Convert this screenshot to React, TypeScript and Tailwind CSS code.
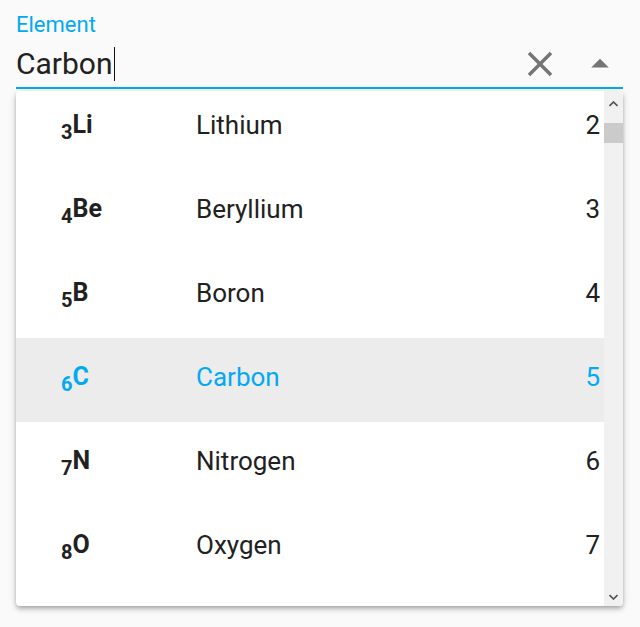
import { ReactNode } from "react"

interface Element {
  number: number
  symbol: string
  name: string
  index: number
}

// rows visible in the open listbox (list is scrolled a few px)
const ELEMENTS: Element[] = [
  { number: 3, symbol: "Li", name: "Lithium", index: 2 },
  { number: 4, symbol: "Be", name: "Beryllium", index: 3 },
  { number: 5, symbol: "B", name: "Boron", index: 4 },
  { number: 6, symbol: "C", name: "Carbon", index: 5 },
  { number: 7, symbol: "N", name: "Nitrogen", index: 6 },
  { number: 8, symbol: "O", name: "Oxygen", index: 7 },
]

const SELECTED = "Carbon"

function IconBox({ children }: { children: ReactNode }) {
  return <div className="w-[42px] h-[42px] flex items-center justify-center text-[#757575]">{children}</div>
}

function Row({ el }: { el: Element }) {
  const active = el.name === SELECTED
  return (
    <div
      className={`grid grid-cols-[135px_1fr_auto] items-center h-[84px] shrink-0 pl-[45px] pr-[4px] pb-[5px] text-[26px] ${
        active ? "bg-[#ececec] text-[#03a9f4]" : "text-[#212121]"
      }`}
    >
      <div className="font-bold">
        <span className="text-[20px] align-[-6px]">{el.number}</span>
        <span className="text-[25px]">{el.symbol}</span>
      </div>
      <div>{el.name}</div>
      <div className="text-right">{el.index}</div>
    </div>
  )
}

function Scrollbar() {
  return (
    <div className="w-[19px] shrink-0 bg-[#f1f1f1] flex flex-col items-center">
      <svg width="9" height="6" viewBox="0 0 9 6" className="mt-[10px]">
        <path d="M0.5 5 4.5 1 8.5 5" fill="none" stroke="#505050" strokeWidth="1.6" />
      </svg>
      <div className="w-full h-[20px] mt-[16px] bg-[#cbcbcb]" />
      <div className="flex-1" />
      <svg width="9" height="6" viewBox="0 0 9 6" className="mb-[6px]">
        <path d="M0.5 1 4.5 5 8.5 1" fill="none" stroke="#505050" strokeWidth="1.6" />
      </svg>
    </div>
  )
}

export default function App() {
  return (
    <div
      className="w-[640px] h-[627px] bg-[#fafafa] pl-[16px] pr-[17px] pt-[12px] flex flex-col"
      style={{ fontFamily: "Roboto, 'Noto Sans', sans-serif" }}
    >
      <label className="text-[22px] leading-[25px] text-[#03a9f4]">Element</label>
      <div className="mt-[7px] flex items-center h-[40px] mb-[3px]">
        <div className="flex-1 flex items-center text-[30px] leading-[40px] text-[#212121]">
          <span>{SELECTED}</span>
          <span className="w-[1px] h-[34px] bg-[#111] ml-[1px]" />
        </div>
        <div className="flex items-center gap-[18px] pr-[2px]">
          <IconBox>
            <svg viewBox="0 0 24 24" width="42" height="42" fill="currentColor">
              <path d="M19 6.41 17.59 5 12 10.59 6.41 5 5 6.41 10.59 12 5 17.59 6.41 19 12 13.41 17.59 19 19 17.59 13.41 12z" />
            </svg>
          </IconBox>
          <IconBox>
            <svg viewBox="0 0 24 24" width="42" height="42" fill="currentColor">
              <path d="M7 14l5-5 5 5z" />
            </svg>
          </IconBox>
        </div>
      </div>
      <div className="h-[2px] bg-[#03a9f4]" />
      <div className="mt-[2px] h-[515px] bg-white rounded-[4px] overflow-hidden flex shadow-[0_2px_4px_-1px_rgba(0,0,0,0.25),0_4px_5px_rgba(0,0,0,0.12),0_1px_10px_rgba(0,0,0,0.1)]">
        <div className="flex-1 overflow-hidden">
          <div className="-mt-[5px] flex flex-col">
            {ELEMENTS.map((el) => (
              <Row key={el.symbol} el={el} />
            ))}
          </div>
        </div>
        <Scrollbar />
      </div>
    </div>
  )
}
